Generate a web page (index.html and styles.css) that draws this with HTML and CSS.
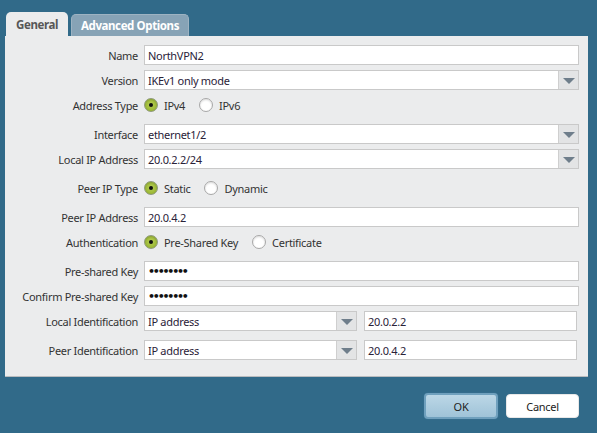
FILE: index.html
```html
<!DOCTYPE html>
<html>
<head>
<meta charset="utf-8">
<link rel="stylesheet" href="styles.css">
</head>
<body>
<div class="dialog">
  <div class="tabs">
    <div class="tab active">General</div>
    <div class="tab inactive">Advanced Options</div>
  </div>
  <div class="panel">
    <div class="row"><div class="label">Name</div><div class="field"><div class="input">NorthVPN2</div></div></div>
    <div class="row"><div class="label">Version</div><div class="field"><div class="select"><span class="val">IKEv1 only mode</span><span class="arrow"></span></div></div></div>
    <div class="row radios"><div class="label">Address Type</div><div class="field opts">
      <span class="opt"><span class="radio on"></span>IPv4</span>
      <span class="opt"><span class="radio"></span>IPv6</span>
    </div></div>
    <div class="row sp"><div class="label">Interface</div><div class="field"><div class="select"><span class="val">ethernet1/2</span><span class="arrow"></span></div></div></div>
    <div class="row"><div class="label">Local IP Address</div><div class="field"><div class="select"><span class="val">20.0.2.2/24</span><span class="arrow"></span></div></div></div>
    <div class="row radios sp"><div class="label">Peer IP Type</div><div class="field opts">
      <span class="opt"><span class="radio on"></span>Static</span>
      <span class="opt"><span class="radio"></span>Dynamic</span>
    </div></div>
    <div class="row sp"><div class="label">Peer IP Address</div><div class="field"><div class="input">20.0.4.2</div></div></div>
    <div class="row radios"><div class="label">Authentication</div><div class="field opts">
      <span class="opt"><span class="radio on"></span>Pre-Shared Key</span>
      <span class="opt"><span class="radio"></span>Certificate</span>
    </div></div>
    <div class="row sp"><div class="label">Pre-shared Key</div><div class="field"><div class="input pw">&bull;&bull;&bull;&bull;&bull;&bull;&bull;&bull;</div></div></div>
    <div class="row"><div class="label">Confirm Pre-shared Key</div><div class="field"><div class="input pw">&bull;&bull;&bull;&bull;&bull;&bull;&bull;&bull;</div></div></div>
    <div class="row"><div class="label">Local Identification</div><div class="field split">
      <div class="select half"><span class="val">IP address</span><span class="arrow"></span></div>
      <div class="input half2">20.0.2.2</div>
    </div></div>
    <div class="row sp"><div class="label">Peer Identification</div><div class="field split">
      <div class="select half"><span class="val">IP address</span><span class="arrow"></span></div>
      <div class="input half2">20.0.4.2</div>
    </div></div>
  </div>
  <div class="buttons">
    <div class="btn ok">OK</div>
    <div class="btn cancel">Cancel</div>
  </div>
</div>
</body>
</html>
```
FILE: styles.css
```css
html, body {
  margin: 0;
  padding: 0;
}
body {
  background: #316a89;
  width: 597px;
  height: 433px;
  overflow: hidden;
  font-family: "Noto Sans", "Open Sans", sans-serif;
  font-size: 11px;
  letter-spacing: -0.3px;
  color: #333;
}
.dialog {
  padding: 12px 9px 0 5px;
}
.tabs {
  display: flex;
  align-items: flex-end;
  gap: 3px;
  height: 24px;
  padding-left: 1px;
}
.tab {
  font-weight: bold;
  font-size: 11.5px;
  letter-spacing: -0.4px;
  border-radius: 5px 5px 0 0;
  display: flex;
  align-items: center;
  justify-content: center;
}
.tab.active {
  background: #ebeced;
  color: #575757;
  width: 62px;
  height: 24px;
}
.tab.inactive {
  background: #87a3b6;
  color: #fff;
  width: 118px;
  height: 22px;
  border: 1px solid #9db3c2;
  border-bottom: none;
  box-sizing: border-box;
}
.panel {
  background: #ebeced;
  height: 341px;
  box-sizing: border-box;
  padding: 9px 9px 0 0;
  display: flex;
  flex-direction: column;
  gap: 5px;
  border-bottom: 1px solid #b9bcbf;
}
.row {
  display: flex;
  align-items: center;
  height: 20px;
}
.row.sp {
  margin-top: 4px;
}
.label {
  width: 133px;
  text-align: right;
  margin-right: 6px;
  white-space: nowrap;
  color: #333;
}
.field {
  flex: 1;
  height: 20px;
  display: flex;
}
.input, .select {
  flex: 1;
  height: 20px;
  box-sizing: border-box;
  border: 1px solid #c9c9c9;
  background: #fff;
  display: flex;
  align-items: center;
  padding-left: 3px;
  color: #2a2238;
  white-space: nowrap;
}
.select {
  padding-right: 0;
}
.select .val {
  flex: 1;
}
.arrow {
  width: 19px;
  height: 18px;
  background: #e3e4e5;
  border-left: 1px solid #cfcfcf;
  position: relative;
}
.arrow::after {
  content: "";
  position: absolute;
  left: 4px;
  top: 7px;
  border-left: 6px solid transparent;
  border-right: 6px solid transparent;
  border-top: 6px solid #6f7e8b;
}
.pw {
  font-family: "DejaVu Sans", sans-serif;
  font-size: 11px;
  font-weight: bold;
  letter-spacing: -2.2px;
  color: #111;
}
.split {
  gap: 7px;
}
.select.half {
  flex: none;
  width: 213px;
}
.input.half2 {
  flex: none;
  width: 213px;
}
.opts {
  align-items: center;
  gap: 14px;
}
.opt {
  display: flex;
  align-items: center;
  gap: 6px;
  color: #333;
}
.radio {
  width: 14px;
  height: 14px;
  box-sizing: border-box;
  border-radius: 50%;
  border: 1px solid #a7a7a7;
  background: #fff;
  box-shadow: inset 0 1px 2px rgba(0,0,0,0.15);
  position: relative;
}
.radio.on {
  background: radial-gradient(circle at 50% 45%, #b8cf55 0%, #9bb835 70%, #87a22c 100%);
  border-color: #8f9a7a;
}
.radio.on::after {
  content: "";
  position: absolute;
  left: 4px;
  top: 4px;
  width: 4px;
  height: 4px;
  border-radius: 50%;
  background: #111;
}
.buttons {
  display: flex;
  justify-content: flex-end;
  gap: 8px;
  padding: 16px 9px 0 0;
  align-items: center;
}
.btn {
  display: flex;
  align-items: center;
  justify-content: center;
  box-sizing: border-box;
  border-radius: 4px;
  color: #222;
}
.btn.ok {
  width: 74px;
  height: 26px;
  background: linear-gradient(#bcd7e6, #9fc3d8);
  border: 2px solid #6fa0bd;
  box-shadow: 0 0 1px #4f86a8;
}
.btn.cancel {
  width: 73px;
  height: 24px;
  background: #fff;
  border: 1px solid #e8e8e8;
}
```
